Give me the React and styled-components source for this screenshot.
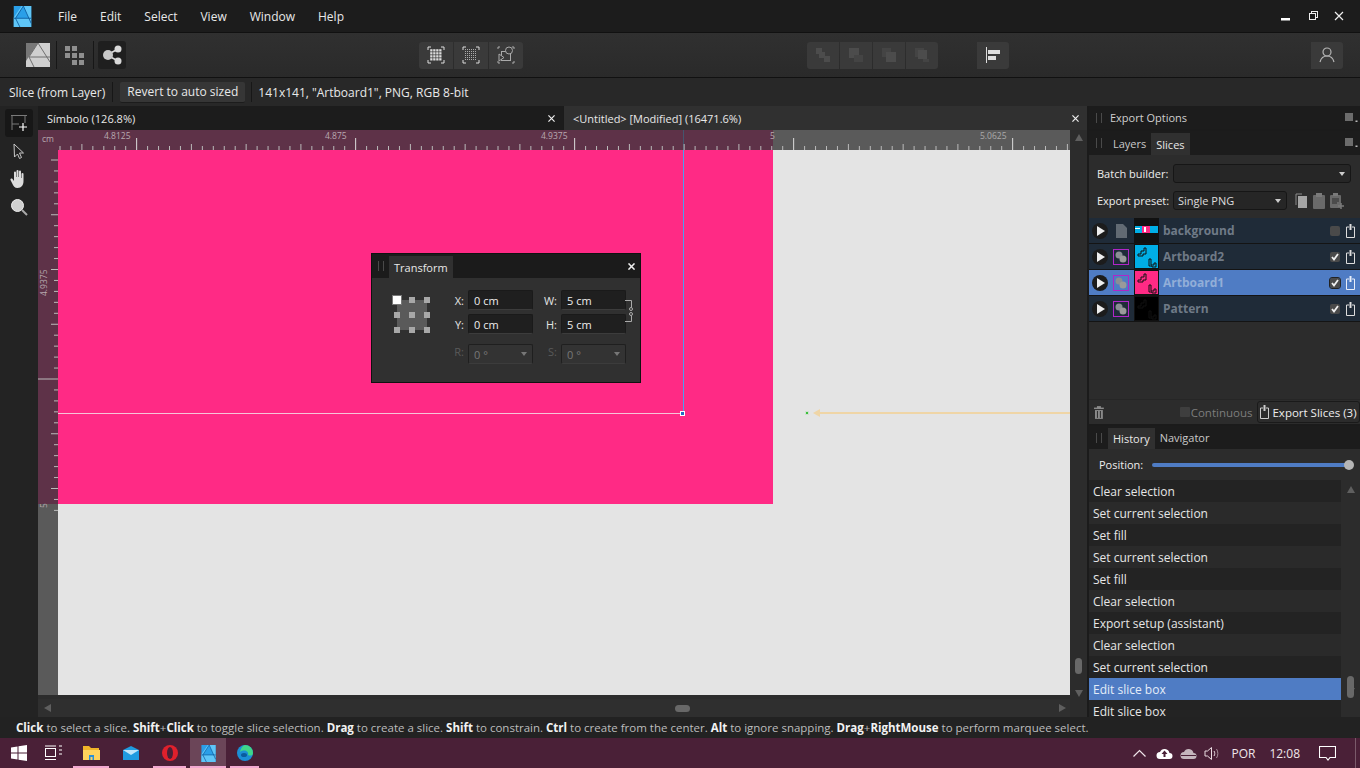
import React from "react";
import styled, { createGlobalStyle } from "styled-components";

const Global = createGlobalStyle`
  html, body { margin: 0; padding: 0; background: #222; }
  * { box-sizing: border-box; }
  body { font-family: "Open Sans", "Liberation Sans", sans-serif; font-size: 12px; color: #e6e6e6; overflow: hidden; }
`;

const Page = styled.div`width:1360px;height:768px;display:flex;flex-direction:column;overflow:hidden;background:#232323;`;

const MenuBar = styled.div`height:33px;background:#1c1c1c;border-bottom:1px solid #111;display:flex;align-items:center;padding-left:12px;`;
const Menus = styled.div`display:flex;gap:23px;margin-left:25px;font-size:12px;color:#e8e8e8;`;
const WinButtons = styled.div`margin-left:auto;display:flex;gap:12px;padding-right:15px;align-items:center;`;

const Toolbar = styled.div`height:45px;background:linear-gradient(#303030,#2a2a2a);border-bottom:1px solid #111;display:flex;align-items:center;position:relative;padding-left:24px;`;
const Sep = styled.div`width:1px;height:28px;background:#171717;margin:0 4px;`;
const PlainIcon = styled.div`width:28px;height:28px;display:flex;align-items:center;justify-content:center;margin-right:${p=>p.$mr||0}px;`;
const DarkIcon = styled.div`width:28px;height:28px;background:#1f1f1f;border-radius:3px;display:flex;align-items:center;justify-content:center;`;
const BtnGroup = styled.div`display:flex;gap:1px;margin-left:${p=>p.$ml}px;`;
const GroupBtn = styled.div`width:${p=>p.$w||34}px;height:27px;background:#3a3a3a;display:flex;align-items:center;justify-content:center;
  &:first-child{border-radius:3px 0 0 3px;} &:last-child{border-radius:0 3px 3px 0;}`;

const ContextBar = styled.div`height:28px;background:#282828;display:flex;align-items:center;padding-left:9px;font-size:12px;color:#e8e8e8;`;
const CtxSep = styled.div`width:1px;height:20px;background:#171717;margin:0 ${p=>p.$m}px;`;
const CtxButton = styled.div`height:21px;width:125px;background:#363636;border-radius:2px;border-bottom:1px solid #1c1c1c;display:flex;align-items:center;justify-content:center;`;

const Main = styled.div`flex:1;display:flex;min-height:0;`;
const ToolCol = styled.div`width:38px;background:#232323;display:flex;flex-direction:column;align-items:center;gap:0;padding-top:3px;padding-right:0;`;
const ToolBtn = styled.div`width:28px;height:28px;display:flex;align-items:center;justify-content:center;border-radius:3px;background:${p=>p.$on?"#171717":"transparent"};`;

const Doc = styled.div`width:1049px;display:flex;flex-direction:column;background:#1b1b1b;`;
const Tabs = styled.div`height:24px;display:flex;gap:1px;background:#1b1b1b;`;
const Tab = styled.div`width:${p=>p.$w}px;display:flex;align-items:center;justify-content:space-between;padding:0 8px 0 9px;font-size:11px;color:#e8e8e8;background:${p=>p.$on?"#303030":"#1c1c1c"};`;
const CanvasGrid = styled.div`flex:1;display:grid;grid-template-columns:1032px 17px;grid-template-rows:1fr 18px;min-height:0;background:#2c2c2c;`;
const Viewport = styled.div`display:grid;grid-template-columns:20px 1012px;grid-template-rows:20px 545px;position:relative;overflow:hidden;`;
const Ruler = styled.svg`display:block;`;
const Canvas = styled.div`background:#e4e4e4;position:relative;overflow:hidden;`;
const Artboard = styled.div`width:715px;height:354px;background:#ff2a85;`;
const GuideV = styled.div`position:absolute;left:625px;top:0;width:1px;height:263px;background:#4aa0f0;`;
const GuideH = styled.div`position:absolute;left:0;top:263px;width:625px;height:1px;background:#f7c4d8;`;
const Handle = styled.div`position:absolute;left:622px;top:261px;width:5px;height:5px;background:#1f6fc4;border:1px solid #fff;box-sizing:content-box;width:3px;height:3px;`;
const Guide2 = styled.div`position:absolute;left:757px;top:262px;width:255px;height:2px;background:#efd5a6;`;
const Arrow = styled.div`position:absolute;left:751px;top:259px;width:0;height:0;border:4px solid transparent;border-right:7px solid #efd5a6;`;
const Dot = styled.div`position:absolute;left:748px;top:262px;width:2px;height:2px;background:#3bbf3b;box-shadow:0 0 0 1px #cfe0cf;`;

const Float = styled.div`position:absolute;left:371px;top:253px;width:270px;height:130px;background:#303030;border:1px solid #111;display:flex;flex-direction:column;`;
const FloatHead = styled.div`height:24px;background:#1b1b1b;display:flex;align-items:stretch;padding-left:6px;`;
const Grip = styled.div`width:6px;height:10px;align-self:center;border-left:1px solid #4a4a4a;border-right:1px solid #4a4a4a;margin-right:${p=>p.$mr||0}px;flex:none;margin-left:${p=>p.$ml||0}px;`;
const PanelTab = styled.div`padding:0 5px;display:flex;align-items:center;font-size:11px;color:${p=>p.$on?"#e8e8e8":"#c9c9c9"};background:${p=>p.$on?"#303030":"transparent"};margin-top:${p=>p.$mt||0}px;`;
const FloatClose = styled.div`margin-left:auto;margin-right:5px;align-self:center;display:flex;`;
const FloatBody = styled.div`flex:1;display:flex;padding:12px 0 0 19px;`;
const Anchor = styled.div`display:grid;grid-template-columns:repeat(3,6px);grid-template-rows:repeat(3,6px);gap:9px;padding:7px 0 0 3px;position:relative;width:42px;`;
const AnchorBack = styled.div`position:absolute;left:6px;top:10px;width:30px;height:30px;background:#5a5a5a;`;
const AnchorDot = styled.div`position:relative;width:6px;height:6px;background:#a8a8a8;`;
const AnchorMain = styled(AnchorDot)`background:#fff;width:10px;height:10px;margin:-2px;border:1px solid #777;`;
const Fields = styled.div`display:grid;grid-template-columns:18px 65px 28px 65px;row-gap:4px;margin-left:17px;align-items:center;height:fit-content;`;
const Lbl = styled.div`text-align:right;padding-right:4px;font-size:11px;color:${p=>p.$dim?"#5a5a5a":"#e4e4e4"};`;
const Input = styled.div`height:20px;background:${p=>p.$dim?"#333":"#1f1f1f"};border:1px solid ${p=>p.$dim?"#1f1f1f":"#1a1a1a"};border-bottom-color:#3c3c3c;border-radius:2px;padding-left:5px;font-size:11px;color:${p=>p.$dim?"#777":"#eee"};display:flex;align-items:center;justify-content:space-between;padding-right:5px;margin-top:${p=>p.$mt||0}px;`;
const Caret = styled.div`width:0;height:0;border:3px solid transparent;border-top:4px solid ${p=>p.$c||"#777"};border-bottom:0;`;
const ChainWrap = styled.div`position:absolute;left:253px;top:46px;`;

const VScroll = styled.div`background:#2c2c2c;position:relative;display:flex;flex-direction:column;justify-content:space-between;align-items:center;padding:4px 0 2px;`;
const HScroll = styled.div`background:#2f2f2f;display:flex;justify-content:space-between;align-items:center;padding:0 4px 0 6px;position:relative;`;
const Corner = styled.div`background:#2c2c2c;`;
const ArrowUp = styled.div`width:0;height:0;border:4px solid transparent;border-bottom:7px solid #5f5f5f;border-top:0;`;
const ArrowDown = styled.div`width:0;height:0;border:4px solid transparent;border-top:7px solid #5f5f5f;border-bottom:0;`;
const ArrowLeft = styled.div`width:0;height:0;border:4px solid transparent;border-right:7px solid #5f5f5f;border-left:0;`;
const ArrowRight = styled.div`width:0;height:0;border:4px solid transparent;border-left:7px solid #5f5f5f;border-right:0;`;
const ThumbV = styled.div`position:absolute;right:${p=>p.$r}px;bottom:${p=>p.$b}px;width:7px;height:${p=>p.$h}px;background:#686868;border-radius:4px;`;
const ThumbH = styled.div`position:absolute;left:637px;top:6px;width:15px;height:7px;background:#686868;border-radius:4px;`;

const Gap = styled.div`width:2px;background:#1b1b1b;`;
const Side = styled.div`width:271px;display:flex;flex-direction:column;background:#1b1b1b;gap:2px;`;
const PanelHead = styled.div`height:${p=>p.$h}px;background:#1c1c1c;display:flex;align-items:stretch;padding-left:6px;flex:none;`;
const HeadTitle = styled.div`display:flex;align-items:center;font-size:11px;color:#cfcfcf;margin-left:8px;`;
const TabRow = styled.div`display:flex;margin-left:6px;align-items:stretch;`;
const HeadMenu = styled.div`margin-left:auto;margin-right:2px;align-self:center;display:flex;`;
const PanelBody = styled.div`flex:1;background:#2c2c2c;display:flex;flex-direction:column;min-height:0;`;
const FormRow = styled.div`display:flex;align-items:center;height:27px;padding-left:8px;font-size:11px;color:#eee;`;
const FormLabel = styled.div`width:76px;flex:none;`;
const Select = styled.div`width:${p=>p.$w}px;height:19px;background:#262626;border:1px solid #161616;border-radius:3px;display:flex;align-items:center;justify-content:space-between;padding:0 5px 0 4px;font-size:11px;color:#ddd;`;
const PresetIcons = styled.div`display:flex;gap:5px;margin-left:8px;`;
const RowList = styled.div`margin-top:4px;`;
const SliceRow = styled.div`height:26px;display:flex;align-items:center;background:${p=>p.$on?"#4f7cc4":"#1f2b38"};border-bottom:1px solid #141414;padding-left:1px;position:relative;`;
const Play = styled.div`width:16px;height:16px;border-radius:50%;background:#1c1c1c;display:flex;align-items:center;justify-content:center;flex:none;margin-left:2px;`;
const PlayTri = styled.div`width:0;height:0;border-left:8px solid #eee;border-top:5.5px solid transparent;border-bottom:5.5px solid transparent;margin-left:2px;`;
const TypeIcon = styled.div`width:16px;height:16px;margin-left:5px;display:flex;align-items:center;justify-content:center;flex:none;`;
const Thumb = styled.div`width:25px;height:25px;margin-left:5px;background:${p=>p.$bg};border:1px solid #111;flex:none;display:flex;align-items:center;justify-content:center;`;
const SliceName = styled.div`margin-left:4px;font-size:12px;font-weight:700;color:${p=>p.$on?"#92aed8":"#6f7a87"};flex:1;`;
const Check = styled.div`width:10px;height:10px;border-radius:2px;background:#4a4a4a;display:flex;align-items:center;justify-content:center;flex:none;margin-right:6px;outline:${p=>p.$on?"1px solid #222":"none"};`;
const Share = styled.div`width:9px;display:flex;margin-right:5px;`;

const ExportBar = styled.div`height:25px;display:flex;align-items:center;background:#2c2c2c;padding-left:5px;border-top:1px solid #262626;font-size:11.5px;`;
const ContBox = styled.div`width:10px;height:10px;background:#3e3e3e;margin-left:76px;border-radius:1px;`;
const ContLabel = styled.div`color:#7d7d7d;margin-left:1px;`;
const ExportBtn = styled.div`height:22px;margin-left:5px;width:104px;border:1px solid #1a1a1a;border-radius:3px;display:flex;align-items:center;gap:3px;padding-left:2px;color:#eee;white-space:nowrap;`;

const SliderRow = styled.div`height:31px;display:flex;align-items:center;padding:0 0 0 10px;font-size:11px;color:#eee;background:#2c2c2c;`;
const Track = styled.div`width:197px;height:4px;margin-left:9px;border-radius:2px;background:#4f7cc4;position:relative;margin-top:0;`;
const Knob = styled.div`position:absolute;right:-5px;top:-3px;width:10px;height:10px;border-radius:50%;background:#b5b5b5;`;
const HistWrap = styled.div`flex:1;display:flex;min-height:0;overflow:hidden;`;
const HistList = styled.div`width:252px;overflow:hidden;background:#222;`;
const HistRow = styled.div`height:22px;display:flex;align-items:center;padding-left:4px;font-size:12px;color:${p=>p.$on?"#e4ecf8":"#e6e6e6"};background:${p=>p.$on?"#4f7cc4":p.$alt?"#2a2a2a":"#232323"};`;
const HistScroll = styled.div`width:19px;background:#2c2c2c;position:relative;display:flex;flex-direction:column;justify-content:space-between;align-items:center;padding:6px 0 22px;`;

const Hint = styled.div`height:21px;background:#222;display:flex;align-items:center;padding-left:16px;font-size:11.5px;color:#bdbdbd;white-space:pre;`;
const B = styled.b`color:#f2f2f2;font-weight:700;`;

const Taskbar = styled.div`height:30px;background:#4a2037;display:flex;align-items:center;position:relative;`;
const TaskIcon = styled.div`width:${p=>p.$w||41}px;height:30px;display:flex;align-items:center;justify-content:center;background:${p=>p.$active?"#6b4558":"transparent"};position:relative;flex:none;`;
const Underline = styled.div`position:absolute;left:${p=>p.$i||0}px;right:${p=>p.$i||0}px;bottom:0;height:2px;background:#f3a9d1;`;
const Tray = styled.div`margin-left:auto;display:flex;align-items:center;font-size:12px;color:#f0e6ea;height:100%;`;
const TrayGap = styled.div`margin-left:${p=>p.$m}px;display:flex;align-items:center;`;
const TrayEdge = styled.div`width:1px;height:100%;background:#7a5a6a;margin-left:19px;margin-right:4px;`;

function HRuler() {
  const t = [];
  for (let x = 2; x < 1012; x += 10.95) {
    const abs = Math.round((x - 2) / 10.95);
    const major = abs % 20 === 7;
    t.push(<line key={x} x1={x} x2={x} y1={major ? 8 : abs % 5 === 2 ? 14 : 16} y2="20" stroke={major ? "#ddd" : "#bbb"} strokeWidth="1" />);
  }
  return (
    <Ruler width="1032" height="20" viewBox="0 0 1032 20">
      <rect width="735" height="20" fill="#5e3248" />
      <rect x="735" width="297" height="20" fill="#5a5a5a" />
      <rect x="645" width="1" height="20" fill="#44566e" />
      <g transform="translate(20,0)">{t}</g>
      <g fontFamily="Open Sans, sans-serif" fontSize="8.5" fill="#b8a9b0">
        <text x="4" y="12">cm</text>
        <text x="66" y="9">4.8125</text>
        <text x="287" y="9">4.875</text>
        <text x="503" y="9">4.9375</text>
        <text x="732" y="9">5</text>
        <text x="942" y="9" fill="#aaa">5.0625</text>
      </g>
    </Ruler>
  );
}
function VRuler() {
  const t = [];
  for (let y = 0; y < 545; y += 10.95) {
    const i = Math.round(y / 10.95);
    if (y > 354) break;
    const major = i % 20 === 0 && i > 0;
    t.push(<line key={y} x1={major ? 0 : i % 5 === 0 ? 13 : 16} x2="20" y1={y + 10} y2={y + 10} stroke="#bbb" />);
  }
  return (
    <Ruler width="20" height="545" viewBox="0 0 20 545">
      <rect width="20" height="354" fill="#5e3248" />
      <rect y="354" width="20" height="191" fill="#5a5a5a" />
      {t}
      <text transform="translate(9,146) rotate(-90)" fontFamily="Open Sans, sans-serif" fontSize="8.5" fill="#b8a9b0">4.9375</text>
      <text transform="translate(9,358) rotate(-90)" fontFamily="Open Sans, sans-serif" fontSize="8.5" fill="#b8a9b0">5</text>
    </Ruler>
  );
}
const CloseX = ({ c = "#eee", s = 8, w = 1.4 }) => (
  <svg width={s} height={s} viewBox="0 0 8 8"><path d="M.5.5l7 7M7.5.5l-7 7" stroke={c} strokeWidth={w} /></svg>
);
const AffinityLogo = ({ s = 20, a = "#2a9fe8", b = "#5fc6f7", line = "#0d5c9e" }) => (
  <svg width={s} height={s} viewBox="0 0 24 24">
    <rect x="2" width="20" height="24" fill={a} />
    <path d="M13 0h9v20zM2 24V13L11 0h2L4 14h18v10z" fill={b} />
    <path d="M2 14h20M13 0L4 14l5 10M13 0l9 20" stroke={line} strokeWidth="1" fill="none" />
  </svg>
);
const MenuIcon = () => (
  <svg width="13" height="10" viewBox="0 0 13 10"><path d="M0 1h8M0 3h8M0 5h8M0 7h8" stroke="#bbb" strokeWidth="1.2" /><rect x="10.5" y="7.5" width="2" height="1.5" fill="#bbb" /></svg>
);
const ShareIcon = ({ c = "#ddd" }) => (
  <svg width="9" height="14" viewBox="0 0 9 14"><path d="M4.5 0v6" stroke={c} strokeWidth="2" /><path d="M3 3H.5v10.5h8V3H6" fill="none" stroke={c} strokeWidth="1" /></svg>
);
const Blob = () => (
  <svg width="16" height="16" viewBox="0 0 16 16"><rect x=".5" y=".5" width="15" height="15" fill="none" stroke="#b026c8" /><circle cx="6" cy="6" r="3.5" fill="#8a8f94" /><circle cx="10" cy="10" r="3.5" fill="#9a9a9a" /></svg>
);
const ThumbArt = ({ c }) => (
  <svg width="23" height="23" viewBox="0 0 23 23"><path d="M3 9h3V6h3V3h2v6H8v2H3zM14 14h2v6h3v-2h2v4h-4v-1h-3z" fill="none" stroke="#111" strokeWidth="1" /></svg>
);
const Tick = () => (
  <svg width="8" height="8" viewBox="0 0 8 8"><path d="M1 4l2 2.5L7 1" stroke="#f0f0f0" strokeWidth="1.8" fill="none" /></svg>
);

const rows = [
  { n: "background", bg: "#111", type: "doc", check: false },
  { n: "Artboard2", bg: "#00aee6", check: true },
  { n: "Artboard1", bg: "#ff2a85", check: true, on: true },
  { n: "Pattern", bg: "#000", check: true },
];
const hist = ["Clear selection","Set current selection","Set fill","Set current selection","Set fill","Clear selection","Export setup (assistant)","Clear selection","Set current selection","Edit slice box","Edit slice box"];

export default function App() {
  return (
    <Page>
      <Global />
      <MenuBar>
        <AffinityLogo s={21} />
        <Menus>{["File","Edit","Select","View","Window","Help"].map(m => <span key={m}>{m}</span>)}</Menus>
        <WinButtons>
          <svg width="10" height="10" viewBox="0 0 10 10"><rect y="7" width="9" height="2.5" fill="#fff" /></svg>
          <svg width="18" height="10" viewBox="0 0 18 10"><rect x="8.5" y=".5" width="6" height="6" fill="none" stroke="#eee" /><rect x="6.5" y="2.5" width="6" height="6" fill="#1c1c1c" stroke="#eee" /></svg>
          <svg width="12" height="10" viewBox="0 0 10 10"><path d="M1 1l8 8M9 1L1 9" stroke="#eee" strokeWidth="1.2" /></svg>
        </WinButtons>
      </MenuBar>

      <Toolbar>
        <PlainIcon>
          <svg width="24" height="24" viewBox="0 0 24 24"><rect width="24" height="24" fill="#cfcfcf" /><path d="M0 0h12L0 18z" fill="#777" /><path d="M12 0L3 14h21M12 0l12 19M3 14l5 10" stroke="#6f6f6f" fill="none" /></svg>
        </PlainIcon>
        <Sep />
        <PlainIcon>
          <svg width="20" height="20" viewBox="0 0 20 20" fill="#8f8f8f"><rect x="0" y="1" width="5" height="5" /><rect x="7" y="1" width="5" height="5" /><rect x="0" y="8" width="5" height="5" /><rect x="7" y="8" width="5" height="5" /><rect x="14" y="8" width="5" height="5" /><rect x="7" y="15" width="5" height="5" /><rect x="14" y="15" width="5" height="5" /></svg>
        </PlainIcon>
        <Sep />
        <DarkIcon>
          <svg width="22" height="20" viewBox="0 0 22 20"><path d="M6 10l11-6M6 10l11 6" stroke="#ddd" strokeWidth="1.5" /><circle cx="7" cy="10" r="5" fill="#c8c8c8" /><circle cx="17" cy="4" r="3.5" fill="#d8d8d8" /><circle cx="17" cy="16" r="3.5" fill="#d8d8d8" /></svg>
        </DarkIcon>
        <BtnGroup $ml={293}>
          <GroupBtn>
            <svg width="18" height="18" viewBox="0 0 18 18"><path d="M1 4V1h3M14 1h3v3M17 14v3h-3M4 17H1v-3" stroke="#ddd" fill="none" /><g fill="#ddd">{[3,6,9,12].flatMap(x=>[3,6,9,12].map(y=><rect key={x+"-"+y} x={x+.2} y={y+.2} width="2.3" height="2.3" />))}</g></svg>
          </GroupBtn>
          <GroupBtn>
            <svg width="18" height="18" viewBox="0 0 18 18"><path d="M1 4V1h3M14 1h3v3M17 14v3h-3M4 17H1v-3" stroke="#ddd" fill="none" /><g fill="#aaa">{[3,5,7,9,11,13].flatMap(x=>[3,5,7,9,11,13].map(y=><rect key={x+"-"+y} x={x} y={y} width="1" height="1" />))}</g></svg>
          </GroupBtn>
          <GroupBtn>
            <svg width="18" height="18" viewBox="0 0 18 18" fill="none" stroke="#aaa"><path d="M1 3V1h2M15 1h2v2M17 15v2h-2M3 17H1v-2" /><rect x="4.5" y="5.5" width="9" height="9" /><circle cx="12" cy="4.5" r="3.5" fill="#3a3a3a" /><path d="M2 8v7l5-3.500z" fill="#3a3a3a" /></svg>
          </GroupBtn>
        </BtnGroup>
        <BtnGroup $ml={284}>
          {[0,1,2,3].map(i => (
            <GroupBtn key={i} $w={32}>
              <svg width="16" height="16" viewBox="0 0 16 16" fill="#4c4c4c">
                {i===0 && <g><rect x="1" y="1" width="6" height="6" /><rect x="4" y="5" width="6" height="6" /><rect x="9" y="9" width="6" height="6" /></g>}
                {i===1 && <g><rect x="1" y="1" width="10" height="10" /><rect x="6" y="8" width="9" height="7" fill="#444" /></g>}
                {i===2 && <g><rect x="1" y="1" width="9" height="9" fill="#444" /><rect x="5" y="5" width="10" height="10" /></g>}
                {i===3 && <g><rect x="1" y="1" width="9" height="9" fill="#444" /><rect x="4" y="3" width="9" height="9" /><rect x="9" y="12" width="6" height="3" fill="#444" /></g>}
              </svg>
            </GroupBtn>
          ))}
        </BtnGroup>
        <BtnGroup $ml={39}>
          <GroupBtn $w={32}>
            <svg width="14" height="16" viewBox="0 0 14 16"><rect width="1" height="16" fill="#ddd" /><rect x="2" y="3" width="12" height="4" fill="#ddd" /><rect x="2" y="9" width="8" height="4" fill="#ddd" /></svg>
          </GroupBtn>
        </BtnGroup>
        <BtnGroup $ml={302}>
          <GroupBtn $w={32}>
            <svg width="16" height="16" viewBox="0 0 16 16" fill="none" stroke="#b5b5b5" strokeWidth="1.2"><circle cx="8" cy="5" r="4" /><path d="M1 15c1-4 4-6 7-6s6 2 7 6" /></svg>
          </GroupBtn>
        </BtnGroup>
      </Toolbar>

      <ContextBar>
        Slice (from Layer)
        <CtxSep $m={7} />
        <CtxButton>Revert to auto sized</CtxButton>
        <CtxSep $m={6} />
        <span style={{ marginLeft: 0 }}>141x141, "Artboard1", PNG, RGB 8-bit</span>
      </ContextBar>

      <Main>
        <ToolCol>
          <ToolBtn $on>
            <svg width="18" height="18" viewBox="0 0 18 18"><path d="M1 1.500h16M2 1.500V16M2 10h7M15 1.500V9" stroke="#7a7a7a" fill="none" /><path d="M13 9v8M9 13h8" stroke="#fff" strokeWidth="1.2" /></svg>
          </ToolBtn>
          <ToolBtn>
            <svg width="14" height="18" viewBox="0 0 14 18"><path d="M2 2l9.500 9H7.500l2 4.500-2 1-2-4.500-3 3z" fill="#222" stroke="#c8c8c8" /></svg>
          </ToolBtn>
          <ToolBtn>
            <svg width="18" height="20" viewBox="0 0 18 20" fill="#dcdcdc"><path d="M4 8V3.500a1 1 0 012 0V8h.5V2a1 1 0 012 0v6h.5V2.500a1 1 0 012 0V9h.5V5a1 1 0 012 0v7c0 4-2 7-6 7-3 0-4-2-5-4L.5 11c-.5-1 1-2 2-1l1.500 2z" /></svg>
          </ToolBtn>
          <ToolBtn>
            <svg width="18" height="18" viewBox="0 0 18 18"><circle cx="7.500" cy="7.500" r="6" fill="#cfcfcf" stroke="#eee" /><path d="M12 12l5 5" stroke="#aaa" strokeWidth="2" /></svg>
          </ToolBtn>
        </ToolCol>

        <Doc>
          <Tabs>
            <Tab $w={525}><span>Símbolo (126.8%)</span><CloseX s={7} /></Tab>
            <Tab $w={523} $on><span>&lt;Untitled&gt; [Modified] (16471.6%)</span><CloseX s={7} /></Tab>
          </Tabs>
          <CanvasGrid>
            <Viewport>
              <div style={{ gridColumn: "1 / 3" }}><HRuler /></div>
              <VRuler />
              <Canvas>
                <Artboard />
                <GuideV />
                <GuideH />
                <Handle />
                <Guide2 />
                <Arrow />
                <Dot />
              </Canvas>
            </Viewport>
            <VScroll>
              <ArrowUp />
              <ThumbV $r={5} $b={25} $h={16} />
              <ArrowDown />
            </VScroll>
            <HScroll>
              <ArrowLeft />
              <ThumbH />
              <ArrowRight />
            </HScroll>
            <Corner />
          </CanvasGrid>
        </Doc>
        <Gap />
        <Side>
          <PanelHead $h={23}>
            <Grip $ml={1} />
            <HeadTitle>Export Options</HeadTitle>
            <HeadMenu><MenuIcon /></HeadMenu>
          </PanelHead>
          <PanelHead $h={24}>
            <Grip $ml={1} />
            <TabRow>
              <PanelTab>Layers</PanelTab>
              <PanelTab $on $mt={2}>Slices</PanelTab>
            </TabRow>
            <HeadMenu><MenuIcon /></HeadMenu>
          </PanelHead>
          <SlicesPanel />
          <PanelHead $h={23}>
            <Grip $ml={1} />
            <TabRow>
              <PanelTab $on $mt={2}>History</PanelTab>
              <PanelTab>Navigator</PanelTab>
            </TabRow>
          </PanelHead>
          <HistoryPanel />
        </Side>
      </Main>

      <Hint>
        <B>Click</B> to select a slice. <B>Shift</B>+<B>Click</B> to toggle slice selection. <B>Drag</B> to create a slice. <B>Shift</B> to constrain. <B>Ctrl</B> to create from the center. <B>Alt</B> to ignore snapping. <B>Drag</B>+<B>RightMouse</B> to perform marquee select.
      </Hint>

      <TaskbarView />

      <Float>
        <FloatHead>
          <Grip $mr={5} />
          <PanelTab $on $mt={2}>Transform</PanelTab>
          <FloatClose><CloseX s={7} w={1.8} /></FloatClose>
        </FloatHead>
        <FloatBody>
          <Anchor>
            <AnchorBack />
            <AnchorMain /><AnchorDot /><AnchorDot />
            <AnchorDot /><AnchorDot /><AnchorDot />
            <AnchorDot /><AnchorDot /><AnchorDot />
          </Anchor>
          <Fields>
            <Lbl>X:</Lbl><Input>0 cm</Input><Lbl>W:</Lbl><Input>5 cm</Input>
            <Lbl>Y:</Lbl><Input>0 cm</Input><Lbl>H:</Lbl><Input>5 cm</Input>
            <Lbl $dim>R:</Lbl><Input $dim $mt={6}>0 °<Caret /></Input><Lbl $dim>S:</Lbl><Input $dim $mt={6}>0 °<Caret /></Input>
          </Fields>
          <ChainWrap>
            <svg width="8" height="22" viewBox="0 0 8 22" fill="none" stroke="#aaa"><path d="M0 .5h6.500v7M0 21.500h6.500v-6" /><circle cx="6" cy="9" r="1.500" /><circle cx="6" cy="14" r="1.500" /></svg>
          </ChainWrap>
        </FloatBody>
      </Float>
    </Page>
  );
}

function SlicesPanel() {
  return (
    <PanelBody style={{ marginTop: -2, flex: "0 0 269px" }}>
      <div style={{ height: 5 }} />
      <FormRow><FormLabel>Batch builder:</FormLabel><Select $w={178}><span /><Caret $c="#ccc" /></Select></FormRow>
      <FormRow>
        <FormLabel>Export preset:</FormLabel>
        <Select $w={114}>Single PNG<Caret $c="#ccc" /></Select>
        <PresetIcons>
          <svg width="13" height="16" viewBox="0 0 13 16"><path d="M1 12V1h6" fill="none" stroke="#8a8a8a" /><rect x="3" y="3" width="9" height="12" fill="#a5a5a5" /></svg>
          <svg width="12" height="16" viewBox="0 0 12 16"><rect y="2" width="12" height="14" rx="1" fill="#6a6a6a" /><rect x="3" y="0" width="6" height="4" fill="#7a7a7a" /></svg>
          <svg width="14" height="16" viewBox="0 0 14 16"><rect y="2" width="11" height="13" rx="1" fill="#6a6a6a" /><rect x="3" y="0" width="5" height="3" fill="#7a7a7a" /><path d="M2 6h7M2 8h7M2 10h5" stroke="#2c2c2c" /><path d="M11 10v6M8 13h6" stroke="#7a7a7a" strokeWidth="1.500" /></svg>
        </PresetIcons>
      </FormRow>
      <RowList>
        {rows.map(r => (
          <SliceRow key={r.n} $on={r.on}>
            <Play><PlayTri /></Play>
            <TypeIcon>
              {r.type === "doc"
                ? <svg width="11" height="14" viewBox="0 0 11 14"><path d="M0 0h7l4 4v10H0z" fill="#616a73" /></svg>
                : <Blob />}
            </TypeIcon>
            <Thumb $bg={r.bg}>
              {r.type === "doc"
                ? <svg width="23" height="23" viewBox="0 0 23 23"><rect y="7" width="23" height="7" fill="#00aee6" /><rect x="7" y="7" width="8" height="7" fill="#ff2a85" /><rect x="9" y="8" width="2" height="5" fill="#fff" /><rect x="0" y="9" width="5" height="1" fill="#fff" /></svg>
                : <ThumbArt />}
            </Thumb>
            <SliceName $on={r.on}>{r.n}</SliceName>
            <Check $on={r.on}>{r.check && <Tick />}</Check>
            <Share><ShareIcon c={r.on ? "#e8eefa" : "#ddd"} /></Share>
          </SliceRow>
        ))}
      </RowList>
      <div style={{ flex: 1 }} />
      <ExportBar>
        <svg width="10" height="13" viewBox="0 0 10 13" fill="#8a8a8a"><rect y="1.500" width="10" height="1.500" /><rect x="3" width="4" height="2" /><path d="M1 4h8v9H1z" /><path d="M3.500 5v7M6.500 5v7" stroke="#2c2c2c" /></svg>
        <ContBox />
        <ContLabel>Continuous</ContLabel>
        <ExportBtn><ShareIcon c="#ccc" />Export Slices (3)</ExportBtn>
      </ExportBar>
    </PanelBody>
  );
}

function HistoryPanel() {
  return (
    <PanelBody style={{ marginTop: -2 }}>
      <SliderRow>Position:<Track><Knob /></Track></SliderRow>
      <HistWrap>
        <HistList>
          {hist.map((h, i) => <HistRow key={i} $alt={i % 2 === 1} $on={i === 9}>{h}</HistRow>)}
        </HistList>
        <HistScroll>
          <ArrowUp />
          <ThumbV $r={6} $b={19} $h={22} />
          <ArrowDown />
        </HistScroll>
      </HistWrap>
    </PanelBody>
  );
}

function TaskbarView() {
  return (
    <Taskbar>
      <TaskIcon $w={38}>
        <svg width="16" height="16" viewBox="0 0 16 16" fill="#fff"><path d="M0 2.500l6.500-1V7.500H0zM7.500 1.300L16 0v7.500H7.500zM0 8.500h6.500v6l-6.500-1zM7.500 8.500H16V16l-8.500-1.200z" /></svg>
      </TaskIcon>
      <TaskIcon $w={31}>
        <svg width="17" height="16" viewBox="0 0 17 16" fill="none" stroke="#fff"><rect x=".5" y="3.500" width="10" height="8" /><path d="M0 1h11M0 14.500h11" /><path d="M14 1h3M14 5h3M14 9h3" /></svg>
      </TaskIcon>
      <TaskIcon $w={44}>
        <svg width="17" height="16" viewBox="0 0 17 16"><path d="M0 1h6l2 2h8v3H0z" fill="#f0b429" /><rect y="5" width="17" height="10" fill="#ffd35c" /><path d="M6 15v-5h5v5h-1.500v-3h-2v3z" fill="#2a8fd8" /></svg>
        <Underline $i={4} />
      </TaskIcon>
      <TaskIcon $w={36}>
        <svg width="16" height="14" viewBox="0 0 16 14"><path d="M0 4l8-4 8 4v10H0z" fill="#1f9be0" /><path d="M0 4l8 5 8-5" fill="#bfe6fa" /></svg>
      </TaskIcon>
      <TaskIcon $w={41}>
        <svg width="16" height="16" viewBox="0 0 16 16"><circle cx="8" cy="8" r="8" fill="#e0202c" /><ellipse cx="8" cy="8" rx="3" ry="6" fill="#4a2037" /></svg>
        <Underline $i={4} />
      </TaskIcon>
      <TaskIcon $w={36} $active>
        <AffinityLogo s={17} />
        <Underline />
      </TaskIcon>
      <TaskIcon $w={37}>
        <svg width="16" height="16" viewBox="0 0 16 16"><circle cx="8" cy="8" r="8" fill="#1b8fd6" /><path d="M8 0a8 8 0 018 8c0 3-3 3-5 2 1-4-4-6-8-3 1-4 3-7 5-7z" fill="#3fd68a" /><ellipse cx="7" cy="10" rx="3" ry="2" fill="#0a5c9e" /></svg>
        <Underline $i={4} />
      </TaskIcon>
      <Tray>
        <svg width="13" height="8" viewBox="0 0 13 8" fill="none" stroke="#f0e6ea"><path d="M.5 7.500l6-6 6 6" strokeWidth="1.200" /></svg>
        <TrayGap $m={10}>
          <svg width="17" height="12" viewBox="0 0 17 12"><path d="M4 12a3.500 3.500 0 010-7 5 5 0 019.500 1 3 3 0 010 6z" fill="#fff" /><path d="M8.500 3.500L5.500 7h2v3h2V7h2z" fill="#4a2037" /></svg>
        </TrayGap>
        <TrayGap $m={7}>
          <svg width="17" height="12" viewBox="0 0 17 12"><path d="M4 12a3.500 3.500 0 010-7 5 5 0 019.500 1 3 3 0 010 6z" fill="#c4b5bc" /><path d="M1 8.500h15" stroke="#4a2037" /></svg>
        </TrayGap>
        <TrayGap $m={7}>
          <svg width="17" height="15" viewBox="0 0 17 15" fill="none" stroke="#eadde2"><path d="M1 5h2.500L7.500 1.500v12L3.500 10H1z" /><path d="M10 5c1 1.500 1 3.500 0 5" /><path d="M12.500 3c1.800 2.500 1.800 6.500 0 9" stroke="#a58f99" /></svg>
        </TrayGap>
        <TrayGap $m={10}>POR</TrayGap>
        <TrayGap $m={14}>12:08</TrayGap>
        <TrayGap $m={19}>
          <svg width="17" height="15" viewBox="0 0 17 15" fill="none" stroke="#fff" strokeWidth="1.100"><path d="M.5.500h16v11h-5.500l-2 2.500-2-2.500H.5z" /></svg>
        </TrayGap>
        <TrayEdge />
      </Tray>
    </Taskbar>
  );
}
